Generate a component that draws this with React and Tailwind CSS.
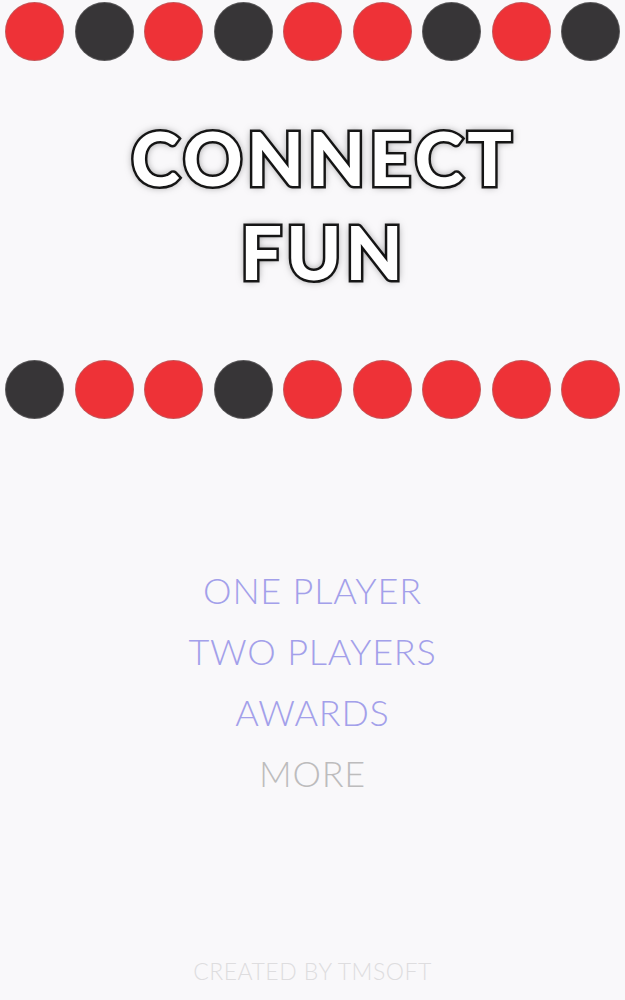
const topRow = ["r", "d", "r", "d", "r", "r", "d", "r", "d"];
const midRow = ["d", "r", "r", "d", "r", "r", "r", "r", "r"];

const Chip = ({ color }) => (
  <div
    className={`w-[59px] h-[59px] rounded-full shrink-0 border border-[#8a8a8a]/40 ${
      color === "r" ? "bg-[#ee3237]" : "bg-[#373537]"
    }`}
  />
);

const ChipRow = ({ chips }) => (
  <div className="flex justify-center gap-[10.5px]">
    {chips.map((c, i) => (
      <Chip key={i} color={c} />
    ))}
  </div>
);

const menuItems = [
  { label: "ONE PLAYER", active: true },
  { label: "TWO PLAYERS", active: true },
  { label: "AWARDS", active: true },
  { label: "MORE", active: false },
];

export default function App() {
  return (
    <div className="w-[625px] h-[1000px] bg-[#f9f8fa] flex flex-col items-center overflow-hidden font-['Lato',sans-serif]">
      <div className="mt-[2px]">
        <ChipRow chips={topRow} />
      </div>

      <h1 className="mt-[50px] ml-[22px] text-center text-white font-black text-[74px] leading-[94px] tracking-[4px] [-webkit-text-stroke:5px_#1b1b1b] [paint-order:stroke_fill] [text-shadow:0_0_8px_rgba(0,0,0,0.55)]">
        CONNECT
        <br />
        FUN
      </h1>

      <div className="mt-[61px]">
        <ChipRow chips={midRow} />
      </div>

      <nav className="mt-[141px] flex flex-col items-center">
        {menuItems.map((item) => (
          <button
            key={item.label}
            className={`font-light text-[36px] leading-[61px] tracking-[0.8px] ${
              item.active ? "text-[#a3a0ea]" : "text-[#bdbcbd]"
            }`}
          >
            {item.label}
          </button>
        ))}
      </nav>

      <p className="mt-auto mb-[12px] font-light text-[23px] text-[#dedddf] tracking-[0.5px]">
        CREATED BY TMSOFT
      </p>
    </div>
  );
}
